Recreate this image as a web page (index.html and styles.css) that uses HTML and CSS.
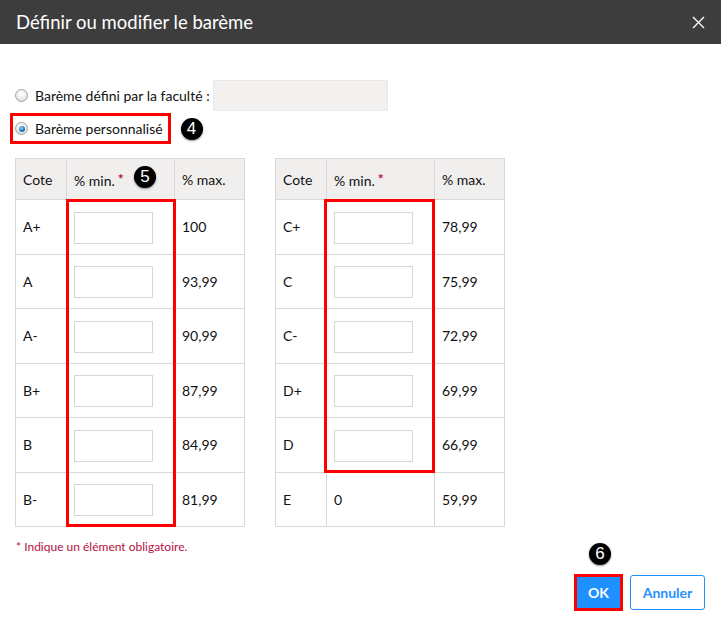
FILE: index.html
```html
<!DOCTYPE html>
<html lang="fr">
<head>
<meta charset="utf-8">
<title>Définir ou modifier le barème</title>
<link rel="stylesheet" href="styles.css">
</head>
<body>
<div class="dialog">
  <header class="hdr">
    <h1 class="title">Définir ou modifier le barème</h1>
    <span class="close" aria-label="Fermer">
      <svg width="13" height="13" viewBox="0 0 13 13"><path d="M1 1 L12 12 M12 1 L1 12" stroke="#fff" stroke-width="1.4" fill="none"/></svg>
    </span>
  </header>
  <main class="content">
    <div class="opt">
      <span class="radio"></span>
      <span class="lbl">Barème défini par la faculté :</span>
      <span class="field"></span>
    </div>
    <div class="opt opt2">
      <span class="mark-inline">
        <span class="radio on"></span>
        <span class="lbl">Barème personnalisé</span>
      </span>
      <span class="badge badge-inline">4</span>
    </div>

    <div class="tables">
      <div class="tw">
        <table class="grid">
          <thead>
            <tr><th class="c1">Cote</th><th class="c2">% min.<span class="req">*</span></th><th class="c3">% max.</th></tr>
          </thead>
          <tbody>
            <tr><td>A+</td><td><span class="inp"></span></td><td>100</td></tr>
            <tr><td>A</td><td><span class="inp"></span></td><td>93,99</td></tr>
            <tr><td>A-</td><td><span class="inp"></span></td><td>90,99</td></tr>
            <tr><td>B+</td><td><span class="inp"></span></td><td>87,99</td></tr>
            <tr><td>B</td><td><span class="inp"></span></td><td>84,99</td></tr>
            <tr><td>B-</td><td><span class="inp"></span></td><td>81,99</td></tr>
          </tbody>
        </table>
        <span class="mark mark-left"></span>
        <span class="badge badge-5">5</span>
      </div>
      <div class="tw">
        <table class="grid">
          <thead>
            <tr><th class="c1">Cote</th><th class="c2">% min.<span class="req">*</span></th><th class="c3">% max.</th></tr>
          </thead>
          <tbody>
            <tr><td>C+</td><td><span class="inp"></span></td><td>78,99</td></tr>
            <tr><td>C</td><td><span class="inp"></span></td><td>75,99</td></tr>
            <tr><td>C-</td><td><span class="inp"></span></td><td>72,99</td></tr>
            <tr><td>D+</td><td><span class="inp"></span></td><td>69,99</td></tr>
            <tr><td>D</td><td><span class="inp"></span></td><td>66,99</td></tr>
            <tr><td>E</td><td>0</td><td>59,99</td></tr>
          </tbody>
        </table>
        <span class="mark mark-right"></span>
      </div>
    </div>

    <p class="note">* Indique un élément obligatoire.</p>

    <div class="actions">
      <button class="btn btn-ok">OK<span class="badge badge-6">6</span></button>
      <button class="btn btn-cancel">Annuler</button>
    </div>
  </main>
</div>
</body>
</html>
```

FILE: styles.css
```css
* { box-sizing: border-box; }
html, body { margin: 0; padding: 0; background: #fff; }
body {
  font-family: Lato, "Open Sans", "Liberation Sans", sans-serif;
  font-size: 14px;
  color: #111;
  width: 721px;
  height: 617px;
  overflow: hidden;
}
.dialog { width: 721px; }

.hdr {
  height: 44px;
  background: #3d3d3d;
  display: flex;
  align-items: center;
  justify-content: space-between;
  padding: 0 16px 0 16px;
}
.title {
  margin: 0;
  font-weight: 400;
  font-size: 18.5px;
  color: #fff;
}
.close { display: flex; width: 13px; height: 13px; }

.content { padding: 36px 16px 0 15px; }

.opt { display: flex; align-items: center; height: 31px; }
.opt2 { margin-top: 2px; }
.radio {
  width: 13px; height: 13px;
  border-radius: 50%;
  border: 1px solid #a0a0a0;
  background: radial-gradient(circle at 50% 35%, #ffffff 0%, #f0f0f0 45%, #d2d2d2 100%);
  flex: none;
  display: inline-flex;
  align-items: center;
  justify-content: center;
}
.radio.on::after {
  content: "";
  width: 6px; height: 6px;
  border-radius: 50%;
  background: radial-gradient(circle at 40% 35%, #8fd0f5 0%, #1b76b8 60%, #0b4f86 100%);
}
.lbl { margin-left: 7px; white-space: nowrap; }
.field {
  margin-left: 3px;
  width: 175px; height: 31px;
  background: #f2f1f0;
  border: 1px solid #e9e8e6;
}
.mark-inline {
  display: inline-flex;
  align-items: center;
  border: 3px solid #ff0000;
  height: 31px;
  margin-left: -5px;
  padding: 0 5px 0 2px;
}

.badge {
  width: 22px; height: 22px;
  border-radius: 50%;
  background: #000;
  color: #fff;
  font-family: "Liberation Sans", Arial, sans-serif;
  font-size: 17px;
  line-height: 22px;
  text-align: center;
  box-shadow: 0 1px 2px rgba(0,0,0,0.45);
  display: inline-block;
  font-weight: 400;
}
.badge-inline { margin-left: 10px; }

.tables { display: flex; gap: 30px; margin-top: 14px; }
.tw { position: relative; }
.grid {
  border-collapse: collapse;
  width: 229px;
  table-layout: fixed;
}
.grid th, .grid td {
  border: 1px solid #d9d9d9;
  text-align: left;
  padding: 0 7px;
  vertical-align: middle;
}
.grid th {
  background: #f0efee;
  height: 41px;
  font-weight: 400;
}
.grid td { height: 54.5px; }
.c1 { width: 51px; }
.c2 { width: 108px; }
.c3 { width: 70px; }
.req { color: #b5123f; font-size: 14px; font-weight: 700; vertical-align: 2px; margin-left: 3px; }
.inp {
  display: block;
  width: 79px; height: 32px;
  border: 1px solid #d6d6d6;
  background: #fff;
  margin-top: 2px;
}

.mark {
  position: absolute;
  border: 3px solid #ff0000;
  pointer-events: none;
}
.mark-left { left: 51px; top: 41px; width: 110px; height: 328px; }
.mark-right { left: 49px; top: 41px; width: 111px; height: 274px; }
.badge-5 { position: absolute; left: 119px; top: 8px; }

.note {
  margin: 12px 0 0 1px;
  font-size: 12px;
  color: #b5123f;
  line-height: 16px;
}

.actions {
  display: flex;
  justify-content: flex-end;
  align-items: center;
  gap: 7px;
  margin-top: 19px;
}
.btn {
  font-family: Lato, "Open Sans", "Liberation Sans", sans-serif;
  font-size: 14px;
  font-weight: 700;
  cursor: pointer;
  position: relative;
}
.btn-ok {
  width: 49px; height: 37px;
  background: #1e90ff;
  color: #fff;
  border: 3px solid #ff0000;
  padding: 0;
}
.btn-cancel {
  width: 75px; height: 35px;
  background: #fff;
  color: #1e90ff;
  border: 1px solid #1e90ff;
  border-radius: 3px;
  padding: 0;
}
.badge-6 { position: absolute; left: 12px; top: -34px; }
```
